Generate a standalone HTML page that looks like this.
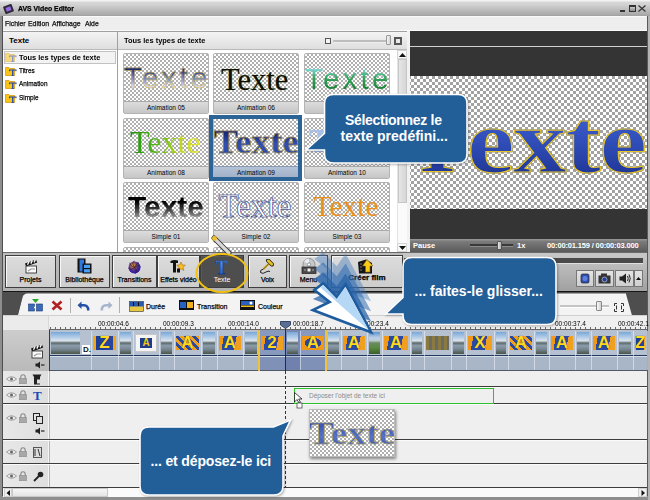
<!DOCTYPE html>
<html><head><meta charset="utf-8">
<style>
*{margin:0;padding:0;box-sizing:border-box}
html,body{width:650px;height:500px;overflow:hidden;background:#efefef;font-family:"Liberation Sans",sans-serif;position:relative}
.a{position:absolute}
.chk{background-color:#fff;background-image:linear-gradient(45deg,#a2a2a2 25%,transparent 25%,transparent 75%,#a2a2a2 75%),linear-gradient(45deg,#a2a2a2 25%,transparent 25%,transparent 75%,#a2a2a2 75%);background-size:6px 6px;background-position:0 0,3px 3px}
.chk2{background:repeating-conic-gradient(#b0b0b0 0 25%,#fff 0 50%) 0 0/4px 4px}
.t{white-space:nowrap;line-height:1}
.dk{-webkit-text-stroke:0.25px #000}
.n{transform:scaleX(.86);transform-origin:0 0}
.th{position:absolute;width:86px;height:60px;border:1px solid #b4b4b4;border-radius:2px;overflow:hidden}
.lb{position:absolute;left:0;bottom:0;width:100%;height:12px;background:linear-gradient(#dcdcdc,#c6c6c6);border-top:1px solid #a9a9a9;font-size:7px;line-height:11px;text-align:center;color:#111}
.tx{position:absolute;white-space:nowrap;line-height:1}
.lb span{display:inline-block;font-size:6.5px;line-height:11px;color:#000}
</style></head><body>
<!-- window frame -->
<div class="a" style="left:0;top:0;width:650px;height:500px;background:#8e8e8e"></div>
<div class="a" style="left:2px;top:16px;width:1px;height:480px;background:#4e4e4e"></div>
<div class="a" style="left:647px;top:16px;width:1px;height:480px;background:#5a5a5a"></div>
<div class="a" style="left:648px;top:16px;width:2px;height:484px;background:#b4b4b4"></div>
<!-- title bar -->
<div class="a" style="left:0;top:0;width:650px;height:16px;background:linear-gradient(#f2f2f2 0,#f2f2f2 1px,#d8d8d8 2px,#d0d0d0 5px,#a8a8a8 15px,#9e9e9e 16px)"></div>
<div class="a t n dk" style="left:18px;top:5px;font-size:8px;font-weight:bold;color:#000">AVS Video Editor</div>
<!-- menu bar -->
<div class="a" style="left:3px;top:16px;width:644px;height:15px;background:#eeeeee;border-top:1px solid #fafafa;border-bottom:1px solid #fafafa"></div>
<div class="a t n dk" style="left:5px;top:20px;font-size:8px;color:#111">Fichier</div>
<div class="a t n dk" style="left:28px;top:20px;font-size:8px;color:#111">Edition</div>
<div class="a t n dk" style="left:52px;top:20px;font-size:8px;color:#111">Affichage</div>
<div class="a t n dk" style="left:85px;top:20px;font-size:8px;color:#111">Aide</div>

<!-- left panel -->
<div class="a" style="left:3px;top:31px;width:115px;height:222px;background:#fff;border:1px solid #a0a0a0;border-left:none;border-bottom-color:#505050"></div>
<div class="a" style="left:3px;top:32px;width:114px;height:18px;background:linear-gradient(#f4f4f4,#dedede);border-bottom:1px solid #b8b8b8"></div>
<div class="a t" style="left:9px;top:37px;font-size:8px;font-weight:bold;color:#000">Texte</div>

<!-- tree items -->
<div class="a" style="left:4px;top:51px;width:112px;height:12.5px;background:#f3f3f3;border:1px solid #c2c2c2"></div>
<svg class="a" style="left:5px;top:52px;opacity:0.55" width="12" height="10"><path d="M0.5 1.5 H4 L5 2.5 H9.5 V9.5 H0.5Z" fill="#f8c418" stroke="#d89a10" stroke-width="0.8"/><path d="M4 3.5 H11.5 V5.2 H10.5 V4.6 H8.4 V9.6 H9.2 V10 H6.3 V9.6 H7.1 V4.6 H5 V5.2 H4Z" fill="#1d45b4"/></svg>
<svg class="a" style="left:5px;top:65.5px;opacity:1" width="12" height="10"><path d="M0.5 1.5 H4 L5 2.5 H9.5 V9.5 H0.5Z" fill="#f8c418" stroke="#d89a10" stroke-width="0.8"/><path d="M4 3.5 H11.5 V5.2 H10.5 V4.6 H8.4 V9.6 H9.2 V10 H6.3 V9.6 H7.1 V4.6 H5 V5.2 H4Z" fill="#1d45b4"/></svg>
<svg class="a" style="left:5px;top:79px;opacity:1" width="12" height="10"><path d="M0.5 1.5 H4 L5 2.5 H9.5 V9.5 H0.5Z" fill="#f8c418" stroke="#d89a10" stroke-width="0.8"/><path d="M4 3.5 H11.5 V5.2 H10.5 V4.6 H8.4 V9.6 H9.2 V10 H6.3 V9.6 H7.1 V4.6 H5 V5.2 H4Z" fill="#1d45b4"/></svg>
<svg class="a" style="left:5px;top:92.5px;opacity:1" width="12" height="10"><path d="M0.5 1.5 H4 L5 2.5 H9.5 V9.5 H0.5Z" fill="#f8c418" stroke="#d89a10" stroke-width="0.8"/><path d="M4 3.5 H11.5 V5.2 H10.5 V4.6 H8.4 V9.6 H9.2 V10 H6.3 V9.6 H7.1 V4.6 H5 V5.2 H4Z" fill="#1d45b4"/></svg>

<div class="a t" style="left:19px;top:54px;font-size:8px;font-weight:bold;color:#000;transform:scaleX(.93);transform-origin:0 0">Tous les types de texte</div>
<div class="a t dk" style="left:19px;top:66.5px;font-size:8px;color:#000;transform:scaleX(.8);transform-origin:0 0">Titres</div>
<div class="a t dk" style="left:19px;top:80px;font-size:8px;color:#000;transform:scaleX(.8);transform-origin:0 0">Animation</div>
<div class="a t dk" style="left:19px;top:93.5px;font-size:8px;color:#000;transform:scaleX(.8);transform-origin:0 0">Simple</div>
<!-- middle panel -->
<div class="a" style="left:117px;top:31px;width:290px;height:222px;background:#fff;border:1px solid #a0a0a0;border-bottom-color:#505050"></div>
<div class="a" style="left:118px;top:32px;width:289px;height:18px;background:linear-gradient(#f4f4f4,#dedede);border-bottom:1px solid #b8b8b8"></div>
<div class="a t" style="left:124px;top:37px;font-size:8px;font-weight:bold;color:#000;transform:scaleX(.93);transform-origin:0 0">Tous les types de texte</div>

<!-- thumbs -->
<div class="th chk2" style="left:123px;top:53px;height:61px"><div class="tx" style="left:0px;top:9px;font-size:29.5px;letter-spacing:3.2px;color:transparent;-webkit-text-stroke:0.5px #d8b040;background:linear-gradient(#0a1a60 15%,#5a74b0 45%,#c8d4ec 75%,#ffffff 95%);-webkit-background-clip:text;background-clip:text">Texte</div><div class="lb"><span>Animation 05</span></div></div>
<div class="th chk2" style="left:213px;top:53px;height:61px"><div class="tx" style="left:7px;top:10.5px;font-family:'Liberation Serif',serif;font-size:30.5px;color:#101008;text-shadow:0 0 1px #8a9a40">Texte</div><div class="lb"><span>Animation 06</span></div></div>
<div class="th chk2" style="left:304px;top:53px;height:61px"><div class="tx" style="left:0px;top:9.5px;font-size:29.5px;letter-spacing:3.2px;color:transparent;background:linear-gradient(#8ee0f0 12%,#3aa860 45%,#178030 90%);-webkit-background-clip:text;background-clip:text">Texte</div><div class="lb"><span>Animation 07</span></div></div>
<div class="th chk2" style="left:123px;top:118px;height:61px"><div class="tx" style="left:6px;top:7.4px;font-family:'Liberation Serif',serif;font-size:32px;color:transparent;background:linear-gradient(90deg,#1a9010 0%,#5cba18 40%,#c8d820 75%,#e8e830 100%);-webkit-background-clip:text;background-clip:text">Texte</div><div class="lb"><span>Animation 08</span></div></div>
<div class="th chk2" style="left:213px;top:118px;height:61px"><div class="tx" style="left:0px;top:7.2px;font-family:'Liberation Serif',serif;font-weight:bold;font-size:33px;letter-spacing:0.3px;transform:scaleX(1.1);transform-origin:0 0;color:transparent;-webkit-text-stroke:0.6px #b89830;background:linear-gradient(#1a2878 20%,#3350b0 55%,#2a48a8 95%);-webkit-background-clip:text;background-clip:text">Texte</div><div class="lb" style="background:linear-gradient(#b4c2d6,#a0b0c8);border-top-color:#8a9ab4"><span>Animation 09</span></div></div>
<div class="th chk2" style="left:304px;top:118px;height:61px"><div class="tx" style="left:4px;top:6.4px;font-family:'Liberation Serif',serif;font-weight:bold;font-size:33px;color:#a8c0e8">Texte</div><div class="lb"><span>Animation 10</span></div></div>
<div class="th chk2" style="left:123px;top:182px;height:61px"><div class="tx" style="left:3.5px;top:9.6px;font-size:29px;font-weight:bold;transform:scaleX(1.03);transform-origin:0 0;color:transparent;background:linear-gradient(#000 30%,#3a3a3a 55%,#8a8a8a 80%,#c8c8c8 100%);-webkit-background-clip:text;background-clip:text">Texte</div><div class="lb"><span>Simple 01</span></div></div>
<div class="th chk2" style="left:213px;top:182px;height:61px"><div class="tx" style="left:4.5px;top:6.5px;font-family:'Liberation Serif',serif;font-size:33px;color:#fff;-webkit-text-stroke:0.55px #1a2a70;text-shadow:0 0 1.5px #7a9ae0">Texte</div><div class="lb"><span>Simple 02</span></div></div>
<div class="th chk2" style="left:304px;top:182px;height:61px"><div class="tx" style="left:8.5px;top:9.3px;font-family:'Liberation Serif',serif;font-size:29.5px;color:#e8901c">Texte</div><div class="lb"><span>Simple 03</span></div></div>
<div class="th chk2" style="left:123px;top:247px;height:10px"></div>
<div class="th chk2" style="left:213px;top:247px;height:10px"></div>
<div class="th chk2" style="left:304px;top:247px;height:10px"></div>
<div class="a" style="left:209px;top:115px;width:93px;height:66px;border:4px solid #2d6497"></div>
<div class="a" style="left:397px;top:50px;width:10px;height:202px;background:#fafafa;border-left:1px solid #e4e4e4"></div>
<div class="a" style="left:398px;top:59px;width:9px;height:144px;background:linear-gradient(90deg,#e6e6e6,#d6d6d6);border:1px solid #c6c6c6"></div>
<div class="a" style="left:397px;top:50px;width:10px;height:9px;background:#f8f8f8;border:1px solid #d4d4d4"></div>
<svg class="a" style="left:399px;top:53px" width="7" height="4"><path d="M0 4 L3.5 0 L7 4Z" fill="#111"/></svg>
<div class="a" style="left:397px;top:243px;width:10px;height:9px;background:#f8f8f8;border:1px solid #d4d4d4"></div>
<svg class="a" style="left:399px;top:246px" width="7" height="4"><path d="M0 0 L3.5 4 L7 0Z" fill="#111"/></svg>
<div class="a" style="left:325px;top:38px;width:6px;height:6px;border:1px solid #555;background:#f4f4f4"></div>
<div class="a" style="left:333px;top:39.5px;width:56px;height:3px;background:#bdbdbd;border-radius:1px;border-bottom:1px solid #eee"></div>
<div class="a" style="left:386px;top:35px;width:5px;height:10px;background:linear-gradient(90deg,#f4f4f4,#d4d4d4);border:1px solid #9a9a9a;border-radius:1px"></div>
<div class="a" style="left:394px;top:37px;width:8px;height:8px;border:2px solid #555;background:#e8e8e8"></div>
<!-- preview panel -->
<div class="a" style="left:407px;top:31px;width:3px;height:221px;background:#f2f2f2"></div>
<div class="a" style="left:410px;top:31px;width:237px;height:221px;background:#343434"></div>
<div class="a" style="left:410px;top:46px;width:237px;height:1px;background:#d0d0d0"></div>
<div class="a chk" style="left:410px;top:76px;width:237px;height:133px;overflow:hidden;background-position:1px 0,4px 3px">
<div class="tx" style="left:-1px;top:20.9px;font-family:'Liberation Serif',serif;font-weight:bold;font-size:90px;transform:scaleX(0.95);transform-origin:0 0;color:transparent;-webkit-text-stroke:1.2px #e4c22a;background:linear-gradient(#3858c8 30%,#2c48b0 60%,#1c3090 95%);-webkit-background-clip:text;background-clip:text">T</div>
<div class="tx" style="left:57px;top:20.9px;font-family:'Liberation Serif',serif;font-weight:bold;font-size:90px;letter-spacing:-1.2px;transform:scaleX(1.19);transform-origin:0 0;color:transparent;-webkit-text-stroke:1.2px #e4c22a;background:linear-gradient(#3858c8 30%,#2c48b0 60%,#1c3090 95%);-webkit-background-clip:text;background-clip:text">exte</div>
</div>
<div class="a" style="left:410px;top:239px;width:237px;height:13px;background:linear-gradient(#9a9a9a 0,#7a7a7a 20%,#5a5a5a 100%)"></div>
<div class="a t" style="left:413px;top:242px;font-size:7.5px;color:#fff;font-weight:bold">Pause</div>
<div class="a" style="left:470px;top:244px;width:43px;height:3px;background:#3a3a3a;border-bottom:1px solid #8a8a8a"></div>
<div class="a" style="left:497px;top:240.5px;width:5px;height:9px;background:linear-gradient(90deg,#e8e8e8,#b0b0b0);border:1px solid #555;border-radius:1px"></div>
<div class="a t" style="left:517px;top:242px;font-size:7.5px;color:#fff;font-weight:bold">1x</div>
<div class="a t" style="left:547px;top:242px;font-size:7.5px;color:#fff;font-weight:bold;letter-spacing:-0.15px">00:00:01.159 / 00:00:03.000</div>
<!-- toolbar -->
<div class="a" style="left:3px;top:252px;width:644px;height:39px;background:linear-gradient(#bcbcbc,#b2b2b2);border-top:1px solid #6a6a6a"></div>
<div class="a" style="left:5px;top:255px;width:51px;height:33px;background:linear-gradient(#dcdcdc,#cdcdcd);border:1px solid #3e3e3e;box-shadow:inset 1px 1px 0 #f8f8f8"></div>
<div class="a t dk" style="left:5px;top:276px;width:51px;text-align:center;font-size:7px;color:#000">Projets</div>
<div class="a" style="left:59px;top:255px;width:51px;height:33px;background:linear-gradient(#dcdcdc,#cdcdcd);border:1px solid #3e3e3e;box-shadow:inset 1px 1px 0 #f8f8f8"></div>
<div class="a t dk" style="left:59px;top:276px;width:51px;text-align:center;font-size:7px;color:#000">Bibliothèque</div>
<div class="a" style="left:112px;top:255px;width:45px;height:33px;background:linear-gradient(#dcdcdc,#cdcdcd);border:1px solid #3e3e3e;box-shadow:inset 1px 1px 0 #f8f8f8"></div>
<div class="a t dk" style="left:112px;top:276px;width:45px;text-align:center;font-size:7px;color:#000">Transitions</div>
<div class="a" style="left:157px;top:255px;width:43px;height:33px;background:linear-gradient(#dcdcdc,#cdcdcd);border:1px solid #3e3e3e;box-shadow:inset 1px 1px 0 #f8f8f8"></div>
<div class="a t dk" style="left:157px;top:276px;width:43px;text-align:center;font-size:7px;color:#000">Effets vidéo</div>
<div class="a" style="left:200px;top:255px;width:44px;height:33px;background:#4e4e4e;border:1px solid #3e3e3e;box-shadow:inset 1px 1px 0 #5a5a5a"></div>
<div class="a t" style="left:200px;top:276px;width:44px;text-align:center;font-size:7px;color:#fff">Texte</div>
<div class="a" style="left:248px;top:255px;width:39px;height:33px;background:linear-gradient(#dcdcdc,#cdcdcd);border:1px solid #3e3e3e;box-shadow:inset 1px 1px 0 #f8f8f8"></div>
<div class="a t dk" style="left:248px;top:276px;width:39px;text-align:center;font-size:7px;color:#000">Voix</div>
<div class="a" style="left:289px;top:255px;width:39px;height:33px;background:linear-gradient(#dcdcdc,#cdcdcd);border:1px solid #3e3e3e;box-shadow:inset 1px 1px 0 #f8f8f8"></div>
<div class="a t dk" style="left:289px;top:276px;width:39px;text-align:center;font-size:7px;color:#000">Menu</div>
<div class="a" style="left:331px;top:255px;width:72px;height:33px;background:linear-gradient(#dcdcdc,#cdcdcd);border:1px solid #3e3e3e;box-shadow:inset 1px 1px 0 #f8f8f8"></div>
<div class="a t dk" style="left:331px;top:274px;width:72px;text-align:center;font-weight:bold;font-size:8px;color:#000">Créer film</div>
<div class="a" style="left:403px;top:253px;width:244px;height:38px;background:linear-gradient(#c6c6c6 0,#c6c6c6 4px,#bdbdbd 11px,#a2a2a2 37px)"></div>
<div class="a" style="left:404px;top:258px;width:239px;height:6px;background:#4a4a4a;border-bottom:1px solid #e0e0e0"></div>
<div class="a" style="left:576px;top:270px;width:18px;height:17px;background:linear-gradient(#e4e4e4,#cfcfcf);border:1px solid #777"></div>
<div class="a" style="left:595px;top:270px;width:19px;height:17px;background:linear-gradient(#e4e4e4,#cfcfcf);border:1px solid #777"></div>
<div class="a" style="left:615px;top:270px;width:19px;height:17px;background:linear-gradient(#e4e4e4,#cfcfcf);border:1px solid #777"></div>
<div class="a" style="left:634px;top:270px;width:9px;height:17px;background:linear-gradient(#e4e4e4,#cfcfcf);border:1px solid #777"></div>
<svg class="a" style="left:636px;top:277px" width="5" height="3"><path d="M0 3 L2.5 0 L5 3Z" fill="#111"/></svg>
<!-- timeline -->
<div class="a" style="left:3px;top:291px;width:644px;height:205px;background:#4e4e4e;border-top:1px solid #151515"></div>
<svg class="a" style="left:3px;top:292px" width="644" height="24"><path d="M15.5 23.5 L20.5 4 Q21.5 2 24 2 L623 2 L629 23.5 Z" fill="#f3f3f3"/><path d="M15.5 23.5 L20.5 4 Q21.5 2 24 2 L623 2" fill="none" stroke="#fbfbfb" stroke-width="1"/></svg>
<!-- ruler -->
<div class="a" style="left:3px;top:315px;width:644px;height:1px;background:#cfcfcf"></div>
<div class="a" style="left:3px;top:316px;width:46px;height:14px;background:#ebebeb"></div>
<div class="a" style="left:48px;top:316px;width:1px;height:14px;background:#d8d8d8"></div>
<div class="a" style="left:49px;top:316px;width:598px;height:14px;background:#efefef"></div>
<div class="a" style="left:50px;top:327px;width:597px;height:2px;background:repeating-linear-gradient(90deg,#6a6a6a 0,#6a6a6a 1px,transparent 1px,transparent 5px)"></div>
<div class="a" style="left:49px;top:329px;width:598px;height:1px;background:#666"></div>
<div class="a t" style="left:98px;top:320px;font-size:7px;color:#000;transform:scaleX(.93);transform-origin:0 0">00:00:04.6</div>
<div class="a t" style="left:163px;top:320px;font-size:7px;color:#000;transform:scaleX(.93);transform-origin:0 0">00:00:09.3</div>
<div class="a t" style="left:228px;top:320px;font-size:7px;color:#000;transform:scaleX(.93);transform-origin:0 0">00:00:14.0</div>
<div class="a t" style="left:293px;top:320px;font-size:7px;color:#000;transform:scaleX(.93);transform-origin:0 0">00:00:18.7</div>
<div class="a t" style="left:358px;top:320px;font-size:7px;color:#000;transform:scaleX(.93);transform-origin:0 0">00:00:23.4</div>
<div class="a t" style="left:555px;top:320px;font-size:7px;color:#000;transform:scaleX(.93);transform-origin:0 0">00:00:37.4</div>
<div class="a t" style="left:618px;top:320px;font-size:7px;color:#000;transform:scaleX(.93);transform-origin:0 0">00:00:42.1</div>
<!-- video track -->
<div class="a" style="left:3px;top:330px;width:46px;height:41px;background:linear-gradient(#cdcdcd,#b9b9b9)"></div>
<div class="a" style="left:49px;top:330px;width:1px;height:41px;background:#3a3a3a"></div>
<div class="a" style="left:50px;top:330px;width:597px;height:25px;background:#b5c1d1"></div>
<div class="a" style="left:50px;top:355px;width:597px;height:1px;background:#22385e"></div>
<div class="a" style="left:50px;top:356px;width:597px;height:1px;background:#d6dde6"></div>
<div class="a" style="left:50px;top:357px;width:597px;height:13px;background:#a9b6c8"></div>
<div class="a" style="left:50px;top:370px;width:597px;height:1px;background:#505868"></div>
<div class="a" style="left:259px;top:330px;width:67px;height:25px;background:rgba(20,50,140,0.28)"></div>
<div class="a" style="left:259px;top:357px;width:67px;height:13px;background:rgba(20,50,140,0.28)"></div>
<div class="a" style="left:286px;top:330px;width:14px;height:40px;background:rgba(20,40,120,0.15)"></div>
<div class="a" style="left:91px;top:331px;width:1px;height:39px;background:rgba(240,244,250,0.55)"></div>
<div class="a" style="left:51px;top:332px;width:29px;height:22px;background:linear-gradient(#78a8d8 0,#c6d8ec 32%,#dde4ea 40%,#5a6a6c 50%,#8c9caa 62%,#74848e 80%,#4a5446 100%)"></div>
<div class="a" style="left:118px;top:331px;width:1px;height:39px;background:rgba(240,244,250,0.55)"></div>
<div class="a" style="left:93px;top:336px;width:23px;height:14px;background:linear-gradient(90deg,#f0a818 0,#f0a818 14%,#1e3c96 14%,#28469e 86%,#f0a818 86%)"></div>
<div class="a t" style="left:93px;top:334px;width:23px;text-align:center;font-size:17px;font-weight:bold;color:#ffd820;text-shadow:0 0 1px #10204a">Z</div>
<div class="a" style="left:133px;top:331px;width:1px;height:39px;background:rgba(240,244,250,0.55)"></div>
<div class="a" style="left:120px;top:332px;width:11px;height:22px;background:linear-gradient(#78a8d8 0,#c6d8ec 32%,#dde4ea 40%,#5a6a6c 50%,#8c9caa 62%,#74848e 80%,#4a5446 100%)"></div>
<div class="a" style="left:159px;top:331px;width:1px;height:39px;background:rgba(240,244,250,0.55)"></div>
<div class="a" style="left:135px;top:334px;width:22px;height:18px;background:#f4f4f4;border:1px solid #c8c8c8"></div>
<div class="a" style="left:140px;top:338px;width:12px;height:10px;background:#1e3c8c"></div>
<div class="a t" style="left:135px;top:338px;width:22px;text-align:center;font-size:10px;font-weight:bold;color:#f0c810">A</div>
<div class="a" style="left:174px;top:331px;width:1px;height:39px;background:rgba(240,244,250,0.55)"></div>
<div class="a" style="left:161px;top:332px;width:11px;height:22px;background:linear-gradient(#78a8d8 0,#c6d8ec 32%,#dde4ea 40%,#5a6a6c 50%,#8c9caa 62%,#74848e 80%,#4a5446 100%)"></div>
<div class="a" style="left:201px;top:331px;width:1px;height:39px;background:rgba(240,244,250,0.55)"></div>
<div class="a" style="left:176px;top:336px;width:23px;height:14px;background:repeating-linear-gradient(45deg,#f0a020 0,#f0a020 3px,#2a4aa0 3px,#2a4aa0 6px)"></div>
<div class="a t" style="left:176px;top:334px;width:23px;text-align:center;font-size:17px;font-weight:bold;color:#ffd820;text-shadow:0 0 1px #10204a">A</div>
<div class="a" style="left:217px;top:331px;width:1px;height:39px;background:rgba(240,244,250,0.55)"></div>
<div class="a" style="left:203px;top:332px;width:12px;height:22px;background:linear-gradient(#78a8d8 0,#c6d8ec 32%,#dde4ea 40%,#5a6a6c 50%,#8c9caa 62%,#74848e 80%,#4a5446 100%)"></div>
<div class="a" style="left:243px;top:331px;width:1px;height:39px;background:rgba(240,244,250,0.55)"></div>
<div class="a" style="left:219px;top:336px;width:22px;height:14px;background:linear-gradient(100deg,#f09818 0,#f09818 20%,#2a4aa8 20%,#2a4aa8 72%,#f0a020 72%)"></div>
<div class="a t" style="left:219px;top:334px;width:22px;text-align:center;font-size:17px;font-weight:bold;color:#ffd820;text-shadow:0 0 1px #10204a">A</div>
<div class="a" style="left:259px;top:331px;width:1px;height:39px;background:rgba(240,244,250,0.55)"></div>
<div class="a" style="left:245px;top:332px;width:12px;height:22px;background:linear-gradient(#78a8d8 0,#c6d8ec 32%,#dde4ea 40%,#5a6a6c 50%,#8c9caa 62%,#74848e 80%,#4a5446 100%)"></div>
<div class="a" style="left:285px;top:331px;width:1px;height:39px;background:rgba(240,244,250,0.55)"></div>
<div class="a" style="left:261px;top:336px;width:22px;height:14px;background:linear-gradient(100deg,#f09818 0,#f09818 20%,#2a4aa8 20%,#2a4aa8 72%,#f0a020 72%)"></div>
<div class="a t" style="left:261px;top:334px;width:22px;text-align:center;font-size:17px;font-weight:bold;color:#ffd820;text-shadow:0 0 1px #10204a">2</div>
<div class="a" style="left:300px;top:331px;width:1px;height:39px;background:rgba(240,244,250,0.55)"></div>
<div class="a" style="left:287px;top:332px;width:11px;height:22px;background:linear-gradient(#78a8d8 0,#c6d8ec 32%,#dde4ea 40%,#5a6a6c 50%,#8c9caa 62%,#74848e 80%,#4a5446 100%)"></div>
<div class="a" style="left:326px;top:331px;width:1px;height:39px;background:rgba(240,244,250,0.55)"></div>
<div class="a" style="left:302px;top:336px;width:22px;height:14px;background:radial-gradient(closest-side,#2848a0 0,#2848a0 75%,#f09818 76%)"></div>
<div class="a t" style="left:302px;top:334px;width:22px;text-align:center;font-size:17px;font-weight:bold;color:#ffd820;text-shadow:0 0 1px #10204a">A</div>
<div class="a" style="left:341px;top:331px;width:1px;height:39px;background:rgba(240,244,250,0.55)"></div>
<div class="a" style="left:328px;top:332px;width:11px;height:22px;background:linear-gradient(#78a8d8 0,#c6d8ec 32%,#dde4ea 40%,#5a6a6c 50%,#8c9caa 62%,#74848e 80%,#4a5446 100%)"></div>
<div class="a" style="left:367px;top:331px;width:1px;height:39px;background:rgba(240,244,250,0.55)"></div>
<div class="a" style="left:343px;top:336px;width:22px;height:14px;background:linear-gradient(100deg,#f09818 0,#f09818 20%,#2a4aa8 20%,#2a4aa8 72%,#f0a020 72%)"></div>
<div class="a t" style="left:343px;top:334px;width:22px;text-align:center;font-size:17px;font-weight:bold;color:#ffd820;text-shadow:0 0 1px #10204a">A</div>
<div class="a" style="left:382px;top:331px;width:1px;height:39px;background:rgba(240,244,250,0.55)"></div>
<div class="a" style="left:369px;top:332px;width:11px;height:22px;background:linear-gradient(#5e94cc 0,#b6cde4 25%,#c0d0d8 38%,#6a8a60 50%,#5a8a40 70%,#3c6028 100%)"></div>
<div class="a" style="left:410px;top:331px;width:1px;height:39px;background:rgba(240,244,250,0.55)"></div>
<div class="a" style="left:384px;top:336px;width:24px;height:14px;background:linear-gradient(100deg,#f09818 0,#f09818 20%,#2a4aa8 20%,#2a4aa8 72%,#f0a020 72%)"></div>
<div class="a t" style="left:384px;top:334px;width:24px;text-align:center;font-size:17px;font-weight:bold;color:#ffd820;text-shadow:0 0 1px #10204a">A</div>
<div class="a" style="left:424px;top:331px;width:1px;height:39px;background:rgba(240,244,250,0.55)"></div>
<div class="a" style="left:412px;top:332px;width:10px;height:22px;background:linear-gradient(#78a8d8 0,#c6d8ec 32%,#dde4ea 40%,#5a6a6c 50%,#8c9caa 62%,#74848e 80%,#4a5446 100%)"></div>
<div class="a" style="left:451px;top:331px;width:1px;height:39px;background:rgba(240,244,250,0.55)"></div>
<div class="a" style="left:426px;top:336px;width:23px;height:14px;background:repeating-linear-gradient(90deg,#8a7a40 0,#8a7a40 3px,#6a6a60 3px,#6a6a60 6px)"></div>
<div class="a" style="left:466px;top:331px;width:1px;height:39px;background:rgba(240,244,250,0.55)"></div>
<div class="a" style="left:453px;top:332px;width:11px;height:22px;background:linear-gradient(#78a8d8 0,#c6d8ec 32%,#dde4ea 40%,#5a6a6c 50%,#8c9caa 62%,#74848e 80%,#4a5446 100%)"></div>
<div class="a" style="left:494px;top:331px;width:1px;height:39px;background:rgba(240,244,250,0.55)"></div>
<div class="a" style="left:468px;top:336px;width:24px;height:14px;background:linear-gradient(100deg,#f09818 0,#f09818 20%,#2a4aa8 20%,#2a4aa8 72%,#f0a020 72%)"></div>
<div class="a t" style="left:468px;top:334px;width:24px;text-align:center;font-size:17px;font-weight:bold;color:#ffd820;text-shadow:0 0 1px #10204a">X</div>
<div class="a" style="left:508px;top:331px;width:1px;height:39px;background:rgba(240,244,250,0.55)"></div>
<div class="a" style="left:496px;top:332px;width:10px;height:22px;background:linear-gradient(#78a8d8 0,#c6d8ec 32%,#dde4ea 40%,#5a6a6c 50%,#8c9caa 62%,#74848e 80%,#4a5446 100%)"></div>
<div class="a" style="left:534px;top:331px;width:1px;height:39px;background:rgba(240,244,250,0.55)"></div>
<div class="a" style="left:510px;top:336px;width:22px;height:14px;background:repeating-linear-gradient(45deg,#f0a020 0,#f0a020 3px,#2a4aa0 3px,#2a4aa0 6px)"></div>
<div class="a t" style="left:510px;top:334px;width:22px;text-align:center;font-size:17px;font-weight:bold;color:#ffd820;text-shadow:0 0 1px #10204a">A</div>
<div class="a" style="left:549px;top:331px;width:1px;height:39px;background:rgba(240,244,250,0.55)"></div>
<div class="a" style="left:536px;top:332px;width:11px;height:22px;background:linear-gradient(#78a8d8 0,#c6d8ec 32%,#dde4ea 40%,#5a6a6c 50%,#8c9caa 62%,#74848e 80%,#4a5446 100%)"></div>
<div class="a" style="left:575px;top:331px;width:1px;height:39px;background:rgba(240,244,250,0.55)"></div>
<div class="a" style="left:551px;top:336px;width:22px;height:14px;background:linear-gradient(100deg,#f09818 0,#f09818 20%,#2a4aa8 20%,#2a4aa8 72%,#f0a020 72%)"></div>
<div class="a t" style="left:551px;top:334px;width:22px;text-align:center;font-size:17px;font-weight:bold;color:#ffd820;text-shadow:0 0 1px #10204a">A</div>
<div class="a" style="left:591px;top:331px;width:1px;height:39px;background:rgba(240,244,250,0.55)"></div>
<div class="a" style="left:577px;top:332px;width:12px;height:22px;background:linear-gradient(#78a8d8 0,#c6d8ec 32%,#dde4ea 40%,#5a6a6c 50%,#8c9caa 62%,#74848e 80%,#4a5446 100%)"></div>
<div class="a" style="left:617px;top:331px;width:1px;height:39px;background:rgba(240,244,250,0.55)"></div>
<div class="a" style="left:593px;top:336px;width:22px;height:14px;background:linear-gradient(100deg,#f09818 0,#f09818 20%,#2a4aa8 20%,#2a4aa8 72%,#f0a020 72%)"></div>
<div class="a t" style="left:593px;top:334px;width:22px;text-align:center;font-size:17px;font-weight:bold;color:#ffd820;text-shadow:0 0 1px #10204a">A</div>
<div class="a" style="left:633px;top:331px;width:1px;height:39px;background:rgba(240,244,250,0.55)"></div>
<div class="a" style="left:619px;top:332px;width:12px;height:22px;background:linear-gradient(#78a8d8 0,#c6d8ec 32%,#dde4ea 40%,#5a6a6c 50%,#8c9caa 62%,#74848e 80%,#4a5446 100%)"></div>
<div class="a" style="left:647px;top:331px;width:1px;height:39px;background:rgba(240,244,250,0.55)"></div>
<div class="a" style="left:635px;top:336px;width:10px;height:14px;background:linear-gradient(90deg,#f0a818 0,#f0a818 14%,#1e3c96 14%,#28469e 86%,#f0a818 86%)"></div>
<div class="a t" style="left:635px;top:334px;width:10px;text-align:center;font-size:17px;font-weight:bold;color:#ffd820;text-shadow:0 0 1px #10204a">Z</div>

<div class="a" style="left:258px;top:330px;width:2px;height:41px;background:#efc23a"></div>
<div class="a" style="left:325px;top:330px;width:2px;height:41px;background:#efc23a"></div>
<div class="a" style="left:285px;top:325px;width:1px;height:46px;background:#1c2c4c"></div>
<svg class="a" style="left:280px;top:321px" width="11" height="8"><path d="M0.5 0.5 H10.5 V4 L5.5 7.5 L0.5 4 Z" fill="#5b6f96" stroke="#34466a"/></svg>
<!-- lower tracks -->
<div class="a" style="left:3px;top:371px;width:644px;height:116px;background:#efefef"></div>
<div class="a" style="left:3px;top:371px;width:46px;height:116px;background:#e2e2e2"></div>
<div class="a" style="left:3px;top:371px;width:46px;height:116px;background:linear-gradient(90deg,#e8e8e8,#dedede)"></div>
<div class="a" style="left:48px;top:371px;width:1px;height:116px;background:#f6f6f6"></div>
<div class="a" style="left:49px;top:371px;width:1px;height:116px;background:#b4b4b4"></div>
<div class="a" style="left:3px;top:386px;width:644px;height:1px;background:#3c3c3c"></div><div class="a" style="left:3px;top:387px;width:644px;height:1px;background:#fbfbfb"></div>
<div class="a" style="left:3px;top:403px;width:644px;height:1px;background:#3c3c3c"></div><div class="a" style="left:3px;top:404px;width:644px;height:1px;background:#fbfbfb"></div>
<div class="a" style="left:3px;top:439px;width:644px;height:1px;background:#3c3c3c"></div><div class="a" style="left:3px;top:440px;width:644px;height:1px;background:#fbfbfb"></div>
<div class="a" style="left:3px;top:463px;width:644px;height:1px;background:#3c3c3c"></div><div class="a" style="left:3px;top:464px;width:644px;height:1px;background:#fbfbfb"></div>
<div class="a" style="left:3px;top:487px;width:644px;height:1px;background:#3c3c3c"></div>
<div class="a" style="left:285px;top:371px;width:1px;height:116px;background:repeating-linear-gradient(#333 0,#333 3px,transparent 3px,transparent 5px)"></div>
<!-- scrollbar -->
<div class="a" style="left:3px;top:488px;width:644px;height:9px;background:#fafafa"></div>
<div class="a" style="left:12px;top:488px;width:96px;height:9px;background:linear-gradient(#f6f6f6,#e4e4e4);border:1px solid #c8c8c8"></div>
<div class="a" style="left:4px;top:488px;width:8px;height:9px;background:#f0f0f0;border:1px solid #d0d0d0"></div>
<svg class="a" style="left:6px;top:490px" width="5" height="6"><path d="M4 0 L0.5 3 L4 6Z" fill="#111"/></svg>
<div class="a" style="left:638px;top:488px;width:9px;height:9px;background:#f0f0f0;border:1px solid #d0d0d0"></div>
<svg class="a" style="left:641px;top:490px" width="5" height="6"><path d="M0.5 0 L4 3 L0.5 6Z" fill="#111"/></svg>
<!-- title icon + buttons -->
<svg class="a" style="left:3px;top:4px" width="11" height="10"><rect x="1" y="1" width="9" height="8" rx="1" transform="rotate(-20 5.5 5)" fill="#2a2a3a"/><rect x="3" y="3" width="5" height="4" transform="rotate(-20 5.5 5)" fill="#9a6ae0"/></svg>
<div class="a" style="left:620px;top:10px;width:5px;height:2px;background:#333"></div>
<div class="a" style="left:629px;top:5px;width:7px;height:7px;border:1px solid #333;border-top-width:2px;background:linear-gradient(#ccc,#888)"></div>
<svg class="a" style="left:638px;top:5px" width="8" height="7"><path d="M0.5 0.5 L7.5 6.5 M7.5 0.5 L0.5 6.5" stroke="#333" stroke-width="1.2"/></svg>

<!-- toolbar icons -->
<svg class="a" style="left:24px;top:258px" width="14" height="16"><path d="M1 5.5 L12 1.5 L13.2 4.6 L2.2 8.6Z" fill="#111"/><path d="M3.5 6.8 L5 3.8 M6.8 5.6 L8.3 2.6 M10 4.4 L11.5 1.4" stroke="#fff" stroke-width="1.3"/><rect x="2" y="8" width="10.5" height="7" fill="#fafafa" stroke="#333" stroke-width="0.9"/><path d="M4 13 L7 11 H11" fill="none" stroke="#999" stroke-width="1.2"/></svg>
<svg class="a" style="left:77px;top:258px" width="15" height="16"><rect x="0.5" y="0.5" width="8" height="14" fill="#111"/><rect x="2.5" y="1.5" width="4.5" height="12" fill="#2e78e0"/><rect x="5.5" y="5.5" width="9" height="10" fill="#111"/><rect x="7" y="6.8" width="6" height="3.2" fill="#48a0f4"/><rect x="7" y="11.2" width="6" height="3.2" fill="#48a0f4"/></svg>
<svg class="a" style="left:127px;top:260px" width="15" height="15"><defs><radialGradient id="tg" cx="40%" cy="35%"><stop offset="0" stop-color="#f0a030"/><stop offset="0.6" stop-color="#6a3a80"/><stop offset="1" stop-color="#3a20a0"/></radialGradient></defs><circle cx="7.5" cy="7.5" r="6.5" fill="url(#tg)" stroke="#e8e8f0" stroke-width="0.8"/><path d="M7.5 7.5 Q4 2 7.5 1 M7.5 7.5 Q12 4 13.5 7 M7.5 7.5 Q11 12 8 13.8 M7.5 7.5 Q3 11 1.5 8 M7.5 7.5 Q2 5 3 2.5 M7.5 7.5 Q11 1.5 12 3" fill="none" stroke="#222" stroke-width="0.7"/></svg>
<svg class="a" style="left:170px;top:259px" width="16" height="15"><path d="M0.5 2 Q4 0.5 8 1.5 V4 H6 V13.5 H3 V4 H0.5Z" fill="#111"/><path d="M11 3 L12.3 6 L15.3 6.2 L13 8.3 L13.8 11.5 L11 9.8 L8.2 11.5 L9 8.3 L6.7 6.2 L9.7 6Z" fill="#f8c020" stroke="#b06a10" stroke-width="0.6"/><path d="M7 9.5 H10 V13.5 H7Z" fill="#111"/></svg>
<svg class="a" style="left:258px;top:259px" width="16" height="16"><path d="M10 1.5 L14 5.5" stroke="#222" stroke-width="4" stroke-linecap="round"/><path d="M10.2 1.8 L13.8 5.3" stroke="#e8c020" stroke-width="2.6" stroke-linecap="round"/><path d="M10.5 5 L5.5 10" stroke="#e0b018" stroke-width="2"/><path d="M10.5 5 L5.5 10" stroke="#222" stroke-width="0.6"/><path d="M5.5 10 Q1.5 11 2.5 13.5 Q5 15.5 8 13 Q10 11.5 12 12.5" fill="none" stroke="#222" stroke-width="1"/></svg>
<svg class="a" style="left:301px;top:258px" width="16" height="16"><circle cx="8" cy="6.5" r="6" fill="#c4c8cc" stroke="#808488" stroke-width="0.8"/><path d="M8 6.5 L3 3.5 A6 6 0 0 1 8 0.5Z" fill="#e8ecf0"/><circle cx="8" cy="6.5" r="1.6" fill="#fff" stroke="#666" stroke-width="0.6"/><rect x="1" y="9" width="14" height="6.5" fill="#4a4a4a" stroke="#2a2a2a" stroke-width="0.8"/><rect x="6.5" y="10.5" width="3" height="3" fill="#f0f0f0"/><path d="M3 12 H5 M11 12 H13" stroke="#aaa"/></svg>
<svg class="a" style="left:357px;top:258px" width="17" height="17"><path d="M1 4 L9 1.5 L15 5 V15.5 H2Z" fill="#151515"/><path d="M3 6 H5 M3 9 H5 M3 12 H5" stroke="#777" stroke-width="1.2"/><path d="M10 1.5 L16 8 H13 V14 H8.5 V8 H5.5Z" fill="#f8cc18" stroke="#8a6010" stroke-width="0.6"/></svg>
<div class="a t" style="left:215.5px;top:258.5px;font-family:'Liberation Serif',serif;font-weight:bold;font-size:18px;color:transparent;background:linear-gradient(#5a9af0,#1c5ac8);-webkit-background-clip:text;background-clip:text;-webkit-text-stroke:0.4px #0a2a70">T</div>
<!-- preview control icons -->
<svg class="a" style="left:580px;top:273px" width="10" height="11"><rect x="1" y="1" width="8" height="9" rx="1.5" fill="#3050b0" stroke="#222" stroke-width="0.7"/><circle cx="5" cy="5.5" r="2.5" fill="#6080e0"/></svg>
<svg class="a" style="left:598px;top:273px" width="13" height="11"><rect x="0.5" y="2.5" width="12" height="8" fill="#333"/><rect x="3" y="0.5" width="6" height="3" fill="#333"/><circle cx="6.5" cy="6.5" r="2.5" fill="#2040a0" stroke="#ddd" stroke-width="0.6"/></svg>
<svg class="a" style="left:619px;top:273px" width="12" height="11"><path d="M0.5 3.5 H3 L7 0.5 V10.5 L3 7.5 H0.5Z" fill="#222"/><path d="M8.5 3 Q10 5.5 8.5 8 M10 1.5 Q12.5 5.5 10 9.5" fill="none" stroke="#222" stroke-width="1"/></svg>

<!-- timeline toolbar icons -->
<svg class="a" style="left:28px;top:299px" width="15" height="13"><path d="M4 0 H11 L7.5 4Z" fill="#28a828"/><rect x="0.5" y="5" width="6" height="7" fill="#3a6ab8" stroke="#1e3c7a" stroke-width="0.6"/><rect x="8.5" y="5" width="6" height="7" fill="#3a6ab8" stroke="#1e3c7a" stroke-width="0.6"/><path d="M6 7.5 L8 8.5 L6 9.5" fill="#fff"/></svg>
<svg class="a" style="left:51px;top:300px" width="12" height="11"><path d="M1.5 1.5 L10.5 9.5 M10.5 1.5 L1.5 9.5" stroke="#b02020" stroke-width="2.6"/></svg>
<div class="a" style="left:70px;top:298px;width:1px;height:15px;background:#b0b0b0"></div>
<svg class="a" style="left:77px;top:301px" width="14" height="10"><path d="M12.5 9.5 Q12.5 3 7 3 H4.5 V0.5 L0.5 4.2 L4.5 8 V5.5 H7 Q10 5.5 10 9.5Z" fill="#2450a8"/></svg>
<svg class="a" style="left:99px;top:301px" width="14" height="10"><path d="M1.5 9.5 Q1.5 3 7 3 H9.5 V0.5 L13.5 4.2 L9.5 8 V5.5 H7 Q4 5.5 4 9.5Z" fill="#a6b4cc"/></svg>
<div class="a" style="left:119px;top:297px;width:1px;height:16px;background:#b0b0b0"></div>
<svg class="a" style="left:129px;top:301px" width="15" height="11"><rect x="0.5" y="0.5" width="14" height="10" fill="#e8c840" stroke="#333" stroke-width="0.6"/><rect x="0.5" y="0.5" width="14" height="5" fill="#2a5ab0"/><path d="M4.5 1 V5 M9.5 1 V5" stroke="#111"/></svg>
<div class="a t dk" style="left:146px;top:303px;font-size:7px;color:#111">Durée</div>
<svg class="a" style="left:179px;top:300px" width="15" height="10"><rect x="0" y="0" width="15" height="10" fill="#111"/><rect x="1" y="2" width="6" height="6" fill="#2a60c0"/><rect x="8" y="2" width="6" height="6" fill="#f0b020"/></svg>
<div class="a t dk" style="left:197px;top:303px;font-size:7px;color:#111">Transition</div>
<svg class="a" style="left:240px;top:300px" width="15" height="10"><rect x="0" y="0" width="15" height="10" fill="#111"/><rect x="1" y="1" width="13" height="4" fill="#2a60c0"/><rect x="1" y="5.5" width="13" height="1.5" fill="#f0c020"/><circle cx="11" cy="3" r="1.5" fill="#fff"/></svg>
<div class="a t dk" style="left:258px;top:303px;font-size:7px;color:#111">Couleur</div>
<!-- timeline zoom slider -->
<div class="a" style="left:560px;top:304.5px;width:49px;height:3px;background:#c4c4c4;border-bottom:1px solid #fff"></div>
<div class="a" style="left:596px;top:301px;width:6px;height:10px;background:linear-gradient(90deg,#f8f8f8,#d0d0d0);border:1px solid #888;border-radius:1px"></div>
<svg class="a" style="left:614px;top:303px" width="10" height="9"><path d="M0.5 3 V0.5 H3 M7 0.5 H9.5 V3 M9.5 6 V8.5 H7 M3 8.5 H0.5 V6 M2.5 2.5 V6.5 M7.5 2.5 V6.5" fill="none" stroke="#333"/></svg>

<!-- track header icons -->
<svg class="a" style="left:30px;top:343px" width="14" height="16"><path d="M1 5.5 L12 1.5 L13.2 4.6 L2.2 8.6Z" fill="#111"/><path d="M3.5 6.8 L5 3.8 M6.8 5.6 L8.3 2.6 M10 4.4 L11.5 1.4" stroke="#fff" stroke-width="1.3"/><rect x="2" y="8" width="10.5" height="7" fill="#fafafa" stroke="#333" stroke-width="0.9"/><path d="M4 13 L7 11 H11" fill="none" stroke="#999" stroke-width="1.2"/></svg>
<svg class="a" style="left:35px;top:361px" width="10" height="8"><path d="M0.5 2.5 H2.5 L5 0.5 V7.5 L2.5 5.5 H0.5Z" fill="#222"/><path d="M6 4 H9.5" stroke="#222" stroke-width="1.2"/></svg>
<svg class="a" style="left:6px;top:376.0px" width="11" height="6"><path d="M0.5 3 Q5.5 -1.5 10.5 3 Q5.5 7.5 0.5 3Z" fill="#f0f0f0" stroke="#8a8a8a" stroke-width="0.8"/><circle cx="5.5" cy="3" r="1.5" fill="#666"/></svg>
<svg class="a" style="left:19px;top:374.0px" width="8" height="10"><path d="M1.8 5 V3.2 Q1.8 0.8 4 0.8 Q6.2 0.8 6.2 3.2 V5" fill="none" stroke="#8a8a8a" stroke-width="1.1"/><rect x="0.5" y="4.5" width="7" height="5.2" fill="#a8a8a8" stroke="#8a8a8a" stroke-width="0.6"/></svg>
<svg class="a" style="left:32px;top:374.0px" width="10" height="11"><path d="M0.5 0.5 H9.5 L8 3 V10.5 H2 V3Z" fill="#222"/><rect x="5" y="5.5" width="4" height="4" fill="#ddd"/></svg>
<svg class="a" style="left:6px;top:392.0px" width="11" height="6"><path d="M0.5 3 Q5.5 -1.5 10.5 3 Q5.5 7.5 0.5 3Z" fill="#f0f0f0" stroke="#8a8a8a" stroke-width="0.8"/><circle cx="5.5" cy="3" r="1.5" fill="#666"/></svg>
<svg class="a" style="left:19px;top:390.0px" width="8" height="10"><path d="M1.8 5 V3.2 Q1.8 0.8 4 0.8 Q6.2 0.8 6.2 3.2 V5" fill="none" stroke="#8a8a8a" stroke-width="1.1"/><rect x="0.5" y="4.5" width="7" height="5.2" fill="#a8a8a8" stroke="#8a8a8a" stroke-width="0.6"/></svg>
<div class="a t" style="left:33px;top:389px;font-family:'Liberation Serif',serif;font-weight:bold;font-size:13px;color:#1a4ab8">T</div>
<svg class="a" style="left:6px;top:415px" width="11" height="6"><path d="M0.5 3 Q5.5 -1.5 10.5 3 Q5.5 7.5 0.5 3Z" fill="#f0f0f0" stroke="#8a8a8a" stroke-width="0.8"/><circle cx="5.5" cy="3" r="1.5" fill="#666"/></svg>
<svg class="a" style="left:19px;top:413px" width="8" height="10"><path d="M1.8 5 V3.2 Q1.8 0.8 4 0.8 Q6.2 0.8 6.2 3.2 V5" fill="none" stroke="#8a8a8a" stroke-width="1.1"/><rect x="0.5" y="4.5" width="7" height="5.2" fill="#a8a8a8" stroke="#8a8a8a" stroke-width="0.6"/></svg>
<svg class="a" style="left:33px;top:413px" width="10" height="11"><rect x="0.5" y="0.5" width="6" height="7" fill="none" stroke="#222"/><rect x="3.5" y="3.5" width="6" height="7" fill="#ddd" stroke="#222"/></svg>
<svg class="a" style="left:35px;top:427px" width="10" height="8"><path d="M0.5 2.5 H2.5 L5 0.5 V7.5 L2.5 5.5 H0.5Z" fill="#222"/><path d="M6 4 H9.5" stroke="#222" stroke-width="1.2"/></svg>
<svg class="a" style="left:6px;top:448.5px" width="11" height="6"><path d="M0.5 3 Q5.5 -1.5 10.5 3 Q5.5 7.5 0.5 3Z" fill="#f0f0f0" stroke="#8a8a8a" stroke-width="0.8"/><circle cx="5.5" cy="3" r="1.5" fill="#666"/></svg>
<svg class="a" style="left:19px;top:446.5px" width="8" height="10"><path d="M1.8 5 V3.2 Q1.8 0.8 4 0.8 Q6.2 0.8 6.2 3.2 V5" fill="none" stroke="#8a8a8a" stroke-width="1.1"/><rect x="0.5" y="4.5" width="7" height="5.2" fill="#a8a8a8" stroke="#8a8a8a" stroke-width="0.6"/></svg>
<svg class="a" style="left:33px;top:446.5px" width="10" height="11"><rect x="0.5" y="0.5" width="8" height="10" fill="#ddd" stroke="#555"/><path d="M2 2 V9 M5 2 L7 9" stroke="#333"/></svg>
<svg class="a" style="left:6px;top:472.5px" width="11" height="6"><path d="M0.5 3 Q5.5 -1.5 10.5 3 Q5.5 7.5 0.5 3Z" fill="#f0f0f0" stroke="#8a8a8a" stroke-width="0.8"/><circle cx="5.5" cy="3" r="1.5" fill="#666"/></svg>
<svg class="a" style="left:19px;top:470.5px" width="8" height="10"><path d="M1.8 5 V3.2 Q1.8 0.8 4 0.8 Q6.2 0.8 6.2 3.2 V5" fill="none" stroke="#8a8a8a" stroke-width="1.1"/><rect x="0.5" y="4.5" width="7" height="5.2" fill="#a8a8a8" stroke="#8a8a8a" stroke-width="0.6"/></svg>
<svg class="a" style="left:33px;top:470.5px" width="11" height="11"><circle cx="7.5" cy="3.5" r="2.8" fill="#222"/><path d="M6 5 L1 10" stroke="#222" stroke-width="1.8"/></svg>
<!-- drop box -->
<div class="a" style="left:294px;top:388px;width:200px;height:16px;border:1.5px solid #2cc22c"></div>
<div class="a t" style="left:309px;top:393px;font-size:6.5px;color:#8a8a8a">Déposer l'objet de texte ici</div>
<!-- dragged thumb -->
<div class="a chk2" style="left:309px;top:409px;width:86px;height:48px;box-shadow:1px 2px 3px rgba(0,0,0,0.45);overflow:hidden;border:1px solid #bbb">
<div class="tx" style="left:-1px;top:7.5px;font-family:'Liberation Serif',serif;font-weight:bold;font-size:31px;letter-spacing:0.2px;transform:scaleX(1.2);transform-origin:0 0;color:transparent;-webkit-text-stroke:0.6px #c8b050;background:linear-gradient(#2a48b0 20%,#4a68c0 60%,#3050a8 95%);-webkit-background-clip:text;background-clip:text;opacity:0.9">Texte</div>
</div>
<!-- mouse cursor -->
<svg class="a" style="left:294px;top:392px" width="10" height="17"><path d="M0.5 0.5 V10 L3 7.5 L5 11 L6.5 10.3 L4.7 7 L8 7Z" fill="#fff" stroke="#000" stroke-width="0.7"/><rect x="3" y="11" width="5" height="5" fill="#fff" stroke="#333" stroke-width="0.7"/></svg>

<!-- ellipse and pencil -->
<svg class="a" style="left:190px;top:232px" width="65" height="65">
<path d="M24 6 L39 21" stroke="#333" stroke-width="5" stroke-linecap="round"/>
<path d="M24 6 L39 21" stroke="#d8d8d8" stroke-width="3.2" stroke-linecap="round"/>
<circle cx="24.5" cy="6.5" r="2.4" fill="#f0c020"/>
<ellipse cx="32" cy="41" rx="25.5" ry="19" fill="none" stroke="#f2c012" stroke-width="2"/>
</svg>

<!-- drag arrow -->
<svg class="a" style="left:300px;top:245px" width="90" height="95">
<g transform="translate(-300,-245)">
<path d="M323.2 283.2 L336.8 297.2 L345.6 284.4 L371.1 332.2 L312.8 310 L329.6 302 L314.4 290Z" transform="translate(0,-31)" fill="#3a74b8" opacity="0.4"/>
<path d="M323.2 283.2 L336.8 297.2 L345.6 284.4 L371.1 332.2 L312.8 310 L329.6 302 L314.4 290Z" transform="translate(0,-21)" fill="#2e6ab0" opacity="0.55"/>
<path d="M323.2 283.2 L336.8 297.2 L345.6 284.4 L371.1 332.2 L312.8 310 L329.6 302 L314.4 290Z" transform="translate(0,-11)" fill="#2a64aa" opacity="0.75"/>
<path d="M323.2 283.2 L336.8 297.2 L345.6 284.4 L371.1 332.2 L312.8 310 L329.6 302 L314.4 290Z" fill="#fff" stroke="#1f5c9e" stroke-width="2.6" stroke-linejoin="miter"/>
<path d="M320.5 287.6 L323.6 285.4 L336.6 299 L345.2 287 L368.8 330.2Z" fill="#b4d8f6"/>
</g>
</svg>
<!-- bubbles -->
<svg class="a" style="left:300px;top:90px;filter:drop-shadow(1px 1px 1px rgba(0,0,0,.3))" width="172" height="76">
<path d="M33.5 5 H158 Q167 5 167 14 V64.5 Q167 73.5 158 73.5 H33.5 Q24.5 73.5 24.5 64.5 V60.5 H6 L24.5 44 V14 Q24.5 5 33.5 5Z" transform="translate(0,-0.5)" fill="#225e98" stroke="#fff" stroke-width="1.6"/>
</svg>
<div class="a t" style="left:345px;top:113px;font-size:14px;font-weight:bold;color:#fff;letter-spacing:-0.3px">Sélectionnez le</div>
<div class="a t" style="left:340.5px;top:129px;font-size:14px;font-weight:bold;color:#fff">texte predéfini...</div>

<svg class="a" style="left:380px;top:252px;filter:drop-shadow(1px 1px 1px rgba(0,0,0,.3))" width="182" height="78">
<path d="M32 5.5 H167 Q176 5.5 176 14.5 V63.5 Q176 72.5 167 72.5 H32 Q23 72.5 23 63.5 V62 H5.5 L23 45.5 V14.5 Q23 5.5 32 5.5Z" fill="#225e98" stroke="#fff" stroke-width="1.6"/>
</svg>
<div class="a t" style="left:414.5px;top:284.3px;font-size:14px;font-weight:bold;color:#fff">... faites-le glisser...</div>

<svg class="a" style="left:135px;top:414px;filter:drop-shadow(1px 1px 1px rgba(0,0,0,.3))" width="162" height="86">
<path d="M14 13 H138.5 L155.5 6 L148 22 V72 Q148 81 139 81 H14 Q5 81 5 72 V22 Q5 13 14 13Z" fill="#225e98" stroke="#fff" stroke-width="1.6"/>
</svg>
<div class="a t" style="left:150.5px;top:453.5px;font-size:14px;font-weight:bold;color:#fff;letter-spacing:-0.15px">... et déposez-le ici</div>
<div class="a" style="left:82px;top:345px;width:8px;height:9px;background:#fff"></div><div class="a t" style="left:83px;top:346px;font-size:8px;font-weight:bold;color:#111">D.</div>
</body></html>
